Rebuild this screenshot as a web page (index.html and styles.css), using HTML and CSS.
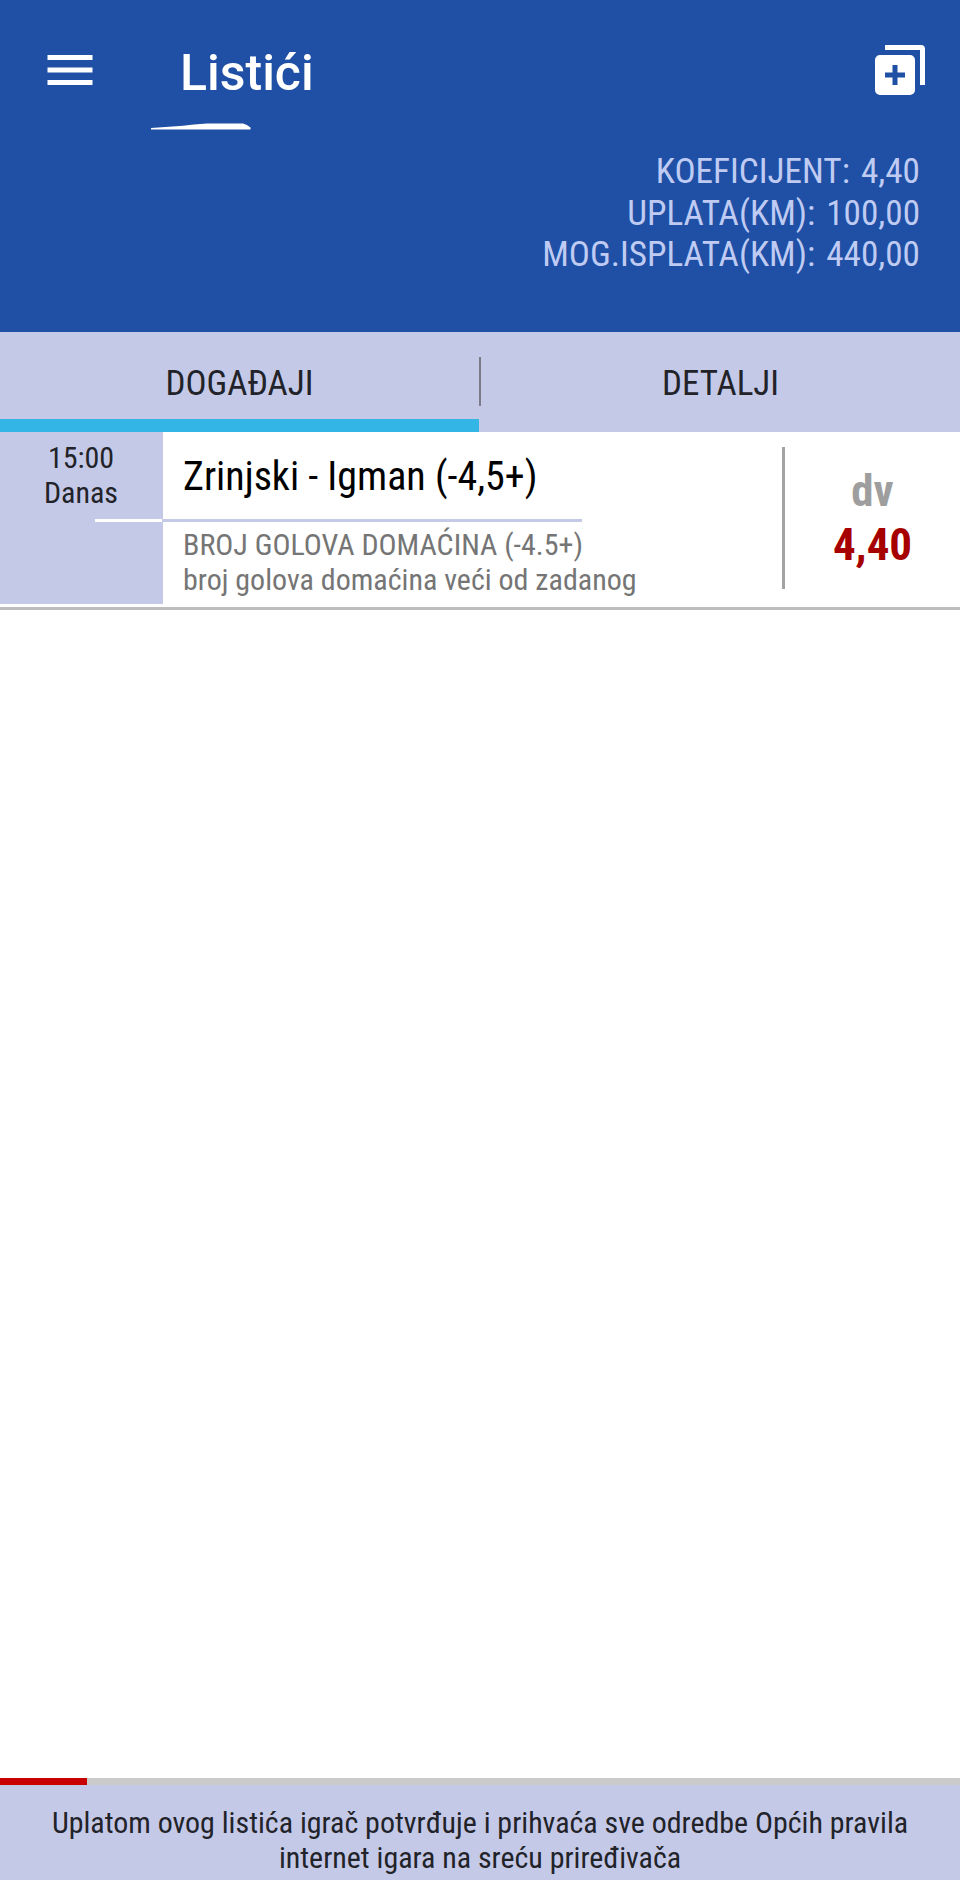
FILE: index.html
```html
<!DOCTYPE html>
<html lang="bs">

<head>
    <meta charset="UTF-8">
    <meta name="viewport" content="width=device-width, initial-scale=1.0">
    <title>Listići</title>
    <link rel="stylesheet" href="styles.css">
</head>

<body>
    <div class="app">
        <header class="header">
            <div class="toolbar">
                <svg class="icon" viewBox="0 0 24 24">
                    <path d="M3 6h18v2H3zM3 11h18v2H3zM3 16h18v2H3z" />
                </svg>
                <h1 class="title">Listići</h1>
                <svg class="icon" viewBox="0 0 24 24">
                    <path d="M6 2h14.4A1.6 1.6 0 0 1 22 3.6V18h-2V4H6z" />
                    <path fill-rule="evenodd" d="M4 6h12a2 2 0 0 1 2 2v12a2 2 0 0 1-2 2H4a2 2 0 0 1-2-2V8a2 2 0 0 1 2-2zM9 10v3H6v2h3v3h2v-3h3v-2h-3v-3z" />
                </svg>
            </div>
            <svg class="stroke" viewBox="0 0 100 8">
                <path d="M0 5L18 3.800L32 2.700L43 1.500L56 .4H92Q96 1.500 99.500 4.500V6.500H0z" />
            </svg>
            <div class="summary">
                <div>KOEFICIJENT: 4,40</div>
                <div>UPLATA(KM): 100,00</div>
                <div>MOG.ISPLATA(KM): 440,00</div>
            </div>
        </header>

        <nav class="tabs">
            <div class="tab tab-active">DOGAĐAJI</div>
            <div class="tab-divider"></div>
            <div class="tab">DETALJI</div>
        </nav>

        <main class="events">
            <div class="event">
                <div class="event-time">
                    <div>15:00</div>
                    <div>Danas</div>
                    <div class="time-line"></div>
                </div>
                <div class="event-info">
                    <div class="match">Zrinjski - Igman (-4,5+)</div>
                    <div class="match-line"></div>
                    <div class="bet">BROJ GOLOVA DOMAĆINA (-4.5+)</div>
                    <div class="bet">broj golova domaćina veći od zadanog</div>
                </div>
                <div class="event-divider"></div>
                <div class="event-odds">
                    <div class="pick">dv</div>
                    <div class="odds">4,40</div>
                </div>
            </div>
        </main>

        <footer class="footer">
            <div class="progress">
                <div class="progress-bar"></div>
            </div>
            <p class="terms">Uplatom ovog listića igrač potvrđuje i prihvaća sve odredbe Općih pravila<br>internet igara na sreću priređivača</p>
        </footer>
    </div>
</body>

</html>
```
FILE: styles.css
```css
* {
    box-sizing: border-box;
}

:root {
    --color-main: #1f50a5;
    --color-light: #c5c9e8;
    --color-summary: #bfcbf2;
    --color-accent: #33b5e5;
    --color-text: #212329;
}

body {
    margin: 0;
    background-color: #fff;
    font-family: "Roboto Condensed", Roboto, sans-serif;
    font-stretch: 75%;
    color: var(--color-text);
    white-space: nowrap;
}

.app {
    display: flex;
    flex-direction: column;
    height: 1880px;
    overflow: hidden;
}

.header {
    height: 332px;
    padding-top: 40px;
    background-color: var(--color-main);
}

.toolbar {
    display: flex;
    height: 60px;
    padding: 0 30px 0 40px;
}

.icon {
    width: 60px;
    height: 60px;
    fill: #fff;
}

.title {
    flex: 1;
    margin: 3px 0 0 80px;
    font-family: Roboto, sans-serif;
    font-stretch: 100%;
    font-size: 50px;
    font-weight: 500;
    line-height: 60px;
    color: #fff;
}

.stroke {
    display: block;
    width: 100px;
    height: 8px;
    margin: 23px 0 0 151px;
    fill: #fff;
}

.summary {
    margin-top: 20px;
    padding-right: 40px;
    font-size: 35.2px;
    line-height: 41.5px;
    word-spacing: 3px;
    text-align: right;
    color: var(--color-summary);
}

.tabs {
    display: flex;
    height: 100px;
    background-color: var(--color-light);
}

.tab {
    flex: 1;
    padding-top: 2px;
    font-size: 35px;
    line-height: 100px;
    text-align: center;
}

.tab-active {
    height: 100px;
    box-shadow: inset 0 -13px var(--color-accent);
}

.tab-divider {
    width: 2px;
    height: 49px;
    margin-top: 25px;
    background-color: #7b7c87;
}

.events {
    flex: 1;
}

.event {
    display: flex;
    height: 178px;
    border-bottom: 3px solid #bdbdbd;
}

.event-time {
    width: 163px;
    height: 172px;
    padding: 8px 1px 0 0;
    background-color: var(--color-light);
    font-size: 30px;
    line-height: 35px;
    text-align: center;
}

.time-line {
    width: 67px;
    height: 3px;
    margin: 9px 0 0 auto;
    background-color: #fff;
}

.event-info {
    width: 619px;
    padding-top: 21px;
}

.match {
    padding-left: 20px;
    font-size: 40px;
    line-height: 47px;
    color: #000;
}

.match-line {
    width: 419px;
    height: 3px;
    margin: 19px 0 5px;
    background-color: var(--color-light);
}

.bet {
    padding-left: 20px;
    font-size: 30px;
    line-height: 35px;
    color: #757575;
}

.event-divider {
    width: 3px;
    height: 142px;
    margin-top: 15px;
    background-color: #a3a3a3;
}

.event-odds {
    flex: 1;
    padding-top: 32px;
    font-size: 45px;
    font-weight: bold;
    line-height: 53px;
    text-align: center;
}

.pick {
    color: #9e9e9e;
}

.odds {
    margin-top: 1px;
    color: #a60000;
}

.footer {
    height: 102px;
    background-color: var(--color-light);
}

.progress {
    height: 7px;
    background-color: #cbcbcb;
}

.progress-bar {
    width: 87px;
    height: 7px;
    background-color: #c80000;
}

.terms {
    margin: 20px 0 0;
    font-size: 29.95px;
    line-height: 35px;
    text-align: center;
}
```
